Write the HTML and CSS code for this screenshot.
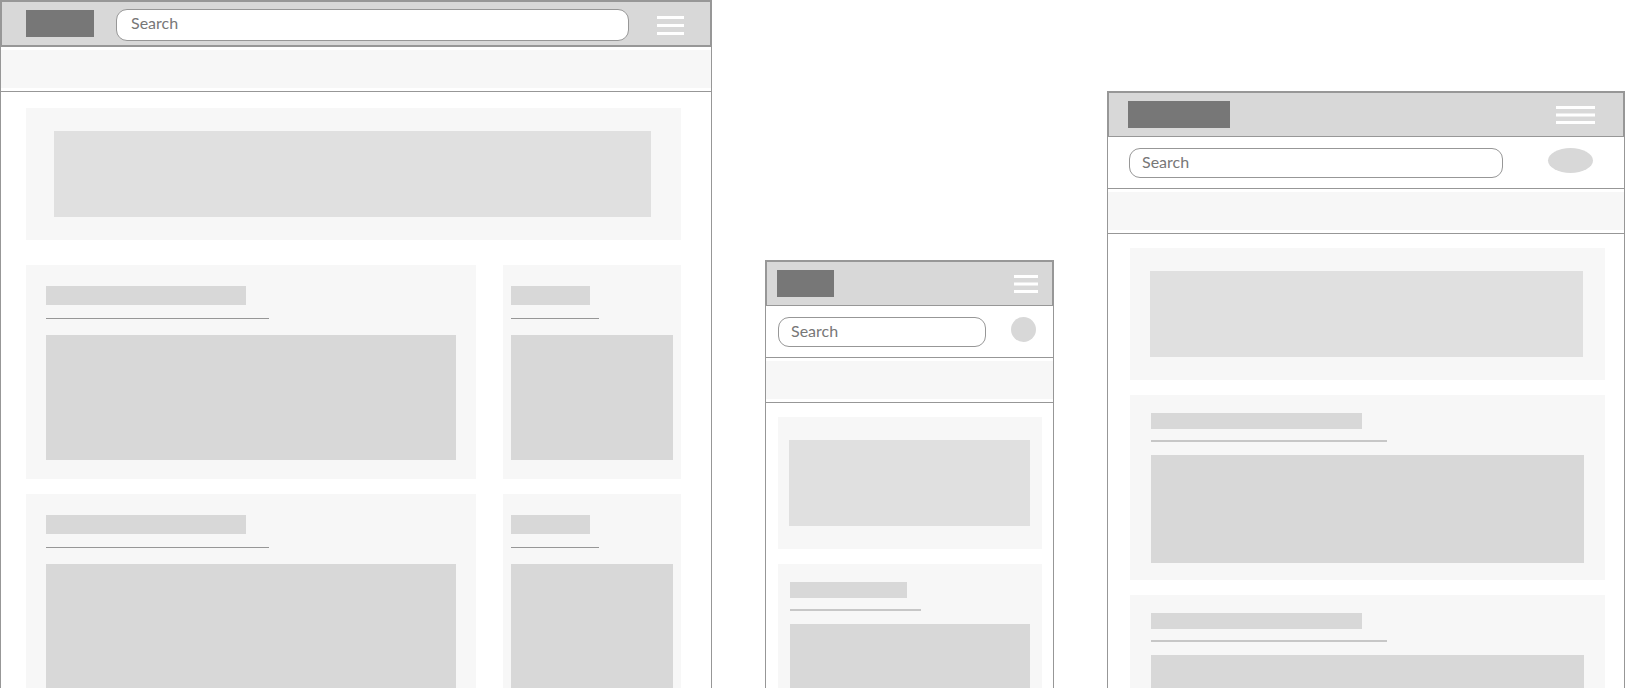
FILE: index.html
```html
<!DOCTYPE html>
<html lang="en">
<head>
<meta charset="utf-8">
<meta name="viewport" content="width=device-width, initial-scale=1">
<title>Responsive wireframes</title>
<link rel="stylesheet" href="styles.css">
</head>
<body>
<main class="board">
  <section class="screen screen-wide" aria-label="Desktop layout">
    <header class="topbar">
      <div class="logo"></div>
      <input class="search" type="search" placeholder="Search" aria-label="Search">
      <button class="menu" type="button" aria-label="Menu"><svg viewBox="0 0 27 19" preserveAspectRatio="none"><path d="M0 0h27v3H0zM0 8h27v3H0zM0 16h27v3H0z"/></svg></button>
    </header>
    <div class="frame">
      <nav class="band" aria-label="Sections"><div class="band-fill"></div></nav>
      <div class="content">
        <div class="hero"><div class="hero-image"></div></div>
        <div class="cards">
          <article class="card"><div class="title"></div><div class="rule"></div><div class="block"></div></article>
          <article class="card card-side"><div class="title"></div><div class="rule"></div><div class="block"></div></article>
          <article class="card"><div class="title"></div><div class="rule"></div><div class="block"></div></article>
          <article class="card card-side"><div class="title"></div><div class="rule"></div><div class="block"></div></article>
        </div>
      </div>
    </div>
  </section>

  <section class="screen screen-phone" aria-label="Phone layout">
    <header class="topbar">
      <div class="logo"></div>
      <button class="menu" type="button" aria-label="Menu"><svg viewBox="0 0 24 18" preserveAspectRatio="none"><path d="M0 0h24v3H0zM0 7.500h24v3H0zM0 15h24v3H0z"/></svg></button>
    </header>
    <div class="frame">
      <div class="searchbar">
        <input class="search" type="search" placeholder="Search" aria-label="Search">
        <div class="avatar"></div>
      </div>
      <nav class="band" aria-label="Sections"><div class="band-fill"></div></nav>
      <div class="content">
        <div class="hero"><div class="hero-image"></div></div>
        <div class="cards">
          <article class="card"><div class="title"></div><div class="rule"></div><div class="block"></div></article>
        </div>
      </div>
    </div>
  </section>

  <section class="screen screen-tablet" aria-label="Tablet layout">
    <header class="topbar">
      <div class="logo"></div>
      <button class="menu" type="button" aria-label="Menu"><svg viewBox="0 0 39 18" preserveAspectRatio="none"><path d="M0 0h39v3H0zM0 7.500h39v3H0zM0 15h39v3H0z"/></svg></button>
    </header>
    <div class="frame">
      <div class="searchbar">
        <input class="search" type="search" placeholder="Search" aria-label="Search">
        <div class="avatar"></div>
      </div>
      <nav class="band" aria-label="Sections"><div class="band-fill"></div></nav>
      <div class="content">
        <div class="hero"><div class="hero-image"></div></div>
        <div class="cards">
          <article class="card"><div class="title"></div><div class="rule"></div><div class="block"></div></article>
          <article class="card"><div class="title"></div><div class="rule"></div><div class="block"></div></article>
        </div>
      </div>
    </div>
  </section>
</main>
</body>
</html>
```
FILE: styles.css
```css
* {
  box-sizing: border-box;
}

body {
  margin: 0;
  background: #fff;
  font-family: Lato, "Liberation Sans", sans-serif;
}

/* Three device frames, running off the bottom of the window */
.board {
  display: flex;
  gap: 53px;
  height: 100vh;
  overflow: hidden;
}

.screen {
  display: flex;
  flex-direction: column;
  min-width: 0;
}

.screen-wide {
  flex: 712 1 0;
}

.screen-phone {
  flex: 289 1 0;
  margin-top: 260px;
}

.screen-tablet {
  flex: 518 1 0;
  margin-top: 91px;
}

.frame {
  flex: 1;
  border: 0 solid #979797;
  border-width: 0 1px;
}

/* Top bar */
.topbar {
  display: flex;
  flex: none;
  align-items: center;
  justify-content: space-between;
  border: 2px solid #979797;
  border-bottom-width: 1px;
  background: #d8d8d8;
}

.screen-wide .topbar {
  gap: 22px;
  height: 47px;
  padding: 8px 26px 5px 24px;
  border-bottom-width: 2px;
}

.screen-phone .topbar {
  height: 46px;
  padding: 8px 14px 7px 10px;
}

.screen-tablet .topbar {
  height: 46px;
  padding: 8px 28px 7px 19px;
}

.logo {
  align-self: flex-start;
  flex: none;
  height: 27px;
  background: #777;
}

.screen-wide .logo {
  width: 68px;
}

.screen-phone .logo {
  width: 57px;
}

.screen-tablet .logo {
  width: 102px;
}

.menu {
  display: block;
  flex: none;
  width: 24px;
  height: 18px;
  padding: 0;
  border: 0;
  background: none;
}

.screen-wide .menu {
  width: 27px;
  height: 19px;
  margin-left: 6px;
}

.screen-tablet .menu {
  width: 39px;
}

.menu svg {
  display: block;
  width: 100%;
  height: 100%;
  fill: #fff;
}

/* Search */
.searchbar {
  display: flex;
  align-items: flex-start;
  border-bottom: 1px solid #979797;
}

.screen-phone .searchbar {
  gap: 25px;
  padding: 11px 17px 10px 12px;
}

.screen-tablet .searchbar {
  gap: 45px;
  padding: 11px 31px 10px 21px;
}

.search {
  flex: 1;
  min-width: 0;
  height: 30px;
  margin: 0;
  padding: 0 12px 4px;
  border: 1px solid #979797;
  border-radius: 11px;
  outline: 0;
  background: #fff;
  color: #777;
  font-family: inherit;
  font-size: 16px;
  appearance: none;
}

.screen-wide .search {
  height: 32px;
  padding: 0 14px 6px;
}

.search::placeholder {
  color: #777;
  opacity: 1;
}

.avatar {
  flex: none;
  width: 25px;
  height: 25px;
  border-radius: 50%;
  background: #d8d8d8;
}

.screen-tablet .avatar {
  width: 45px;
}

/* Section band */
.band {
  padding: 3px 0;
  border-bottom: 1px solid #979797;
}

.band-fill {
  height: 38px;
  background: #f7f7f7;
}

/* Content */
.content {
  display: flex;
  flex-direction: column;
  gap: 15px;
}

.screen-wide .content {
  gap: 25px;
  padding: 16px 30px 15px 25px;
}

.screen-phone .content {
  padding: 14px 11px 15px 12px;
}

.screen-tablet .content {
  padding: 14px 19px 15px 22px;
}

.hero {
  padding: 23px 12px 23px 11px;
  background: #f7f7f7;
}

.screen-wide .hero {
  padding: 23px 30px 23px 28px;
}

.screen-tablet .hero {
  padding: 23px 22px 23px 20px;
}

.hero-image {
  height: 86px;
  background: #e0e0e0;
}

.cards {
  display: grid;
  gap: 15px;
}

.screen-wide .cards {
  grid-template-columns: 450fr 178fr;
  column-gap: 27px;
}

.card {
  padding: 18px 12px 17px;
  background: #f7f7f7;
}

.screen-wide .card {
  padding: 21px 20px 19px;
}

.screen-wide .card-side {
  padding: 21px 8px 19px;
}

.screen-tablet .card {
  padding: 18px 21px 17px;
}

.title {
  width: 48.7%;
  height: 16px;
  background: #d8d8d8;
}

.rule {
  width: 54.4%;
  height: 2px;
  margin: 11px 0 13px;
  background: #c7c7c7;
}

.block {
  height: 108px;
  background: #d8d8d8;
}

.screen-wide .title {
  height: 19px;
}

.screen-wide .rule {
  height: 1px;
  margin: 13px 0 16px;
  background: #979797;
}

.screen-wide .block {
  height: 125px;
}
```
